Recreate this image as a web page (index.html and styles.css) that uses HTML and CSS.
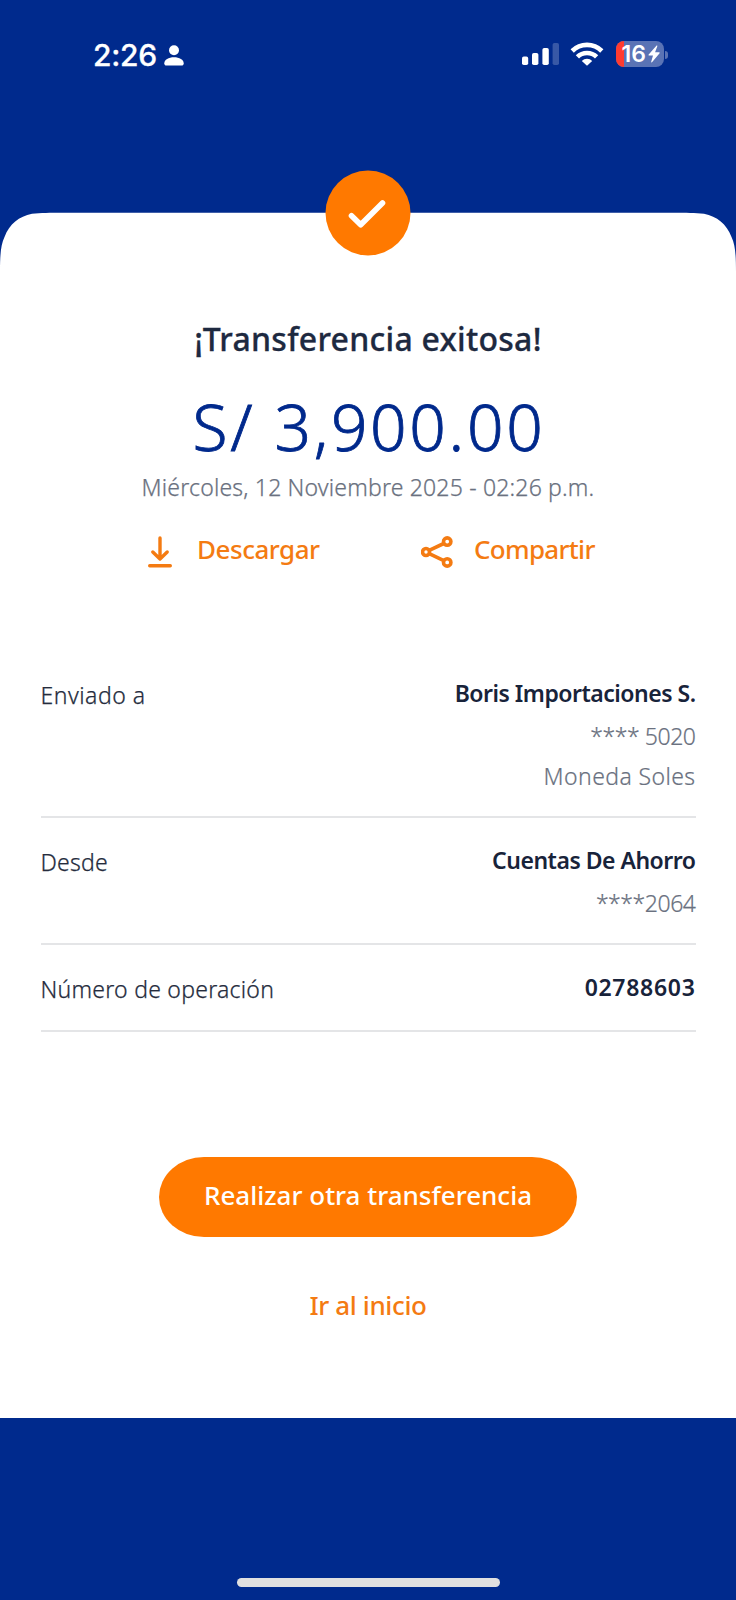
FILE: index.html
```html
<!DOCTYPE html>
<html lang="es">
<head>
<meta charset="utf-8">
<title>Transferencia exitosa</title>
<link rel="stylesheet" href="styles.css">
</head>
<body>
<div class="screen">
  <header class="status">
    <div class="status-left">
      <span class="time">2:26</span>
      <svg class="person" width="20" height="21" viewBox="0 0 20 21" fill="#fff"><circle cx="10" cy="5.3" r="5"/><path d="M0.3 18.3C0.3 14.6 4.6 12.2 10 12.2S19.7 14.6 19.7 18.3C19.7 20 18.9 20.6 17.6 20.6H2.4C1.1 20.6 .3 20 .3 18.3Z"/></svg>
    </div>
    <div class="status-right">
      <svg class="signal" width="38" height="24" viewBox="0 0 38 24" fill="#fff"><rect x="0" y="14.600" width="6.200" height="8.400" rx="1.800"/><rect x="10" y="11" width="6.400" height="12" rx="1.800"/><rect x="20.400" y="6" width="6.400" height="17" rx="1.800"/><rect x="30.600" y="1" width="6.400" height="22" rx="1.800" opacity=".22"/></svg>
      <svg class="wifi" width="34" height="24" viewBox="0 0 34 24" fill="none" stroke="#fff" stroke-width="4.600"><path d="M2.200 9A21 21 0 0 1 31.800 9"/><path d="M7.400 14.900A13.600 13.600 0 0 1 26.600 14.900"/><path d="M17 23.800L11.800 19A7.200 7.200 0 0 1 22.200 19Z" fill="#fff" stroke="none"/></svg>
      <div class="battery"><span class="level"></span><span class="pct">16</span><svg class="bolt" width="12" height="18" viewBox="0 0 12 18" fill="#fff"><path d="M8.600 .6L.5 9.700Q.2 10.500 1 10.500H5L3.200 16.800Q3.200 17.800 4 17.200L11.600 8.200Q12 7.300 11.100 7.300H7.100L9.400 1Q9.400 .1 8.600 .6Z"/></svg></div>
      <span class="nub"></span>
    </div>
  </header>
  <main class="card">
    <svg class="cap" width="736" height="60" viewBox="0 0 736 60" fill="#fff"><path d="M0 60C0 44 .6 33 4.500 25C9.500 12 19 4.500 32 1.800C41 .7 50 .7 62 .7H674C686 .7 695 .7 704 1.800C717 4.500 726.500 12 731.500 25C735.400 33 736 44 736 60Z"/></svg>
    <svg class="badge" width="86" height="86" viewBox="0 0 86 86"><circle cx="43" cy="43" r="42.500" fill="#ff7900"/><path d="M26.500 45.700L35.700 54.800L57.500 33" fill="none" stroke="#fff" stroke-width="5.600" stroke-linecap="round" stroke-linejoin="round"/></svg>
    <h1 class="title">¡Transferencia exitosa!</h1>
    <p class="amount">S/ 3,900.00</p>
    <p class="date">Miércoles, 12 Noviembre 2025 - 02:26 p.m.</p>
    <div class="actions">
      <a class="action download"><svg width="24" height="32" viewBox="0 0 24 32" fill="none" stroke="#f47b12" stroke-width="3.400" stroke-linecap="round" stroke-linejoin="round"><path d="M12 2V22M4.800 16L12 23L19.200 16M1.700 29.800H22.300"/></svg><span>Descargar</span></a>
      <a class="action share"><svg width="32" height="32" viewBox="0 0 32 32" fill="none" stroke="#f47b12" stroke-width="3.600"><circle cx="5" cy="16" r="3.500"/><circle cx="26.200" cy="5.600" r="3.700"/><circle cx="26.200" cy="26.400" r="3.700"/><path d="M8.200 14.400L22.800 7.500M8.200 17.600L22.800 24.600"/></svg><span>Compartir</span></a>
    </div>
    <dl class="rows">
      <div class="row"><dt class="spaced">Enviado a</dt><dd><span class="name">Boris Importaciones S.</span><span class="sub masked">**** 5020</span><span class="sub">Moneda Soles</span></dd></div>
      <div class="row"><dt>Desde</dt><dd><span class="name">Cuentas De Ahorro</span><span class="sub masked">****2064</span></dd></div>
      <div class="row"><dt>Número de operación</dt><dd><span class="name number">02788603</span></dd></div>
    </dl>
    <button class="primary">Realizar otra transferencia</button>
    <a class="home">Ir al inicio</a>
  </main>
  <footer class="bottom"><span class="bar"></span></footer>
</div>
</body>
</html>
```
FILE: styles.css
```css
* { box-sizing: border-box; margin: 0; padding: 0; }
body { width: 736px; height: 1600px; background: #002a8d; font-family: "Noto Sans", "Open Sans", sans-serif; font-weight: 300; }
.screen { height: 1600px; display: flex; flex-direction: column; overflow: hidden; }

.status { height: 212px; padding: 36px 68px 0 93px; display: flex; justify-content: space-between; align-items: flex-start; color: #fff; font-family: Inter, sans-serif; }
.status-left { display: flex; align-items: center; height: 37px; gap: 8px; }
.time { font-size: 30px; font-weight: 500; -webkit-text-stroke: .3px currentColor; line-height: 38px; width: 63px; letter-spacing: -.3px; white-space: nowrap; }
.person { margin-top: 1px; }
.status-right { display: flex; align-items: center; height: 37px; }
.signal { margin-bottom: 1px; }
.wifi { margin: 0 12px 2px 10px; }
.battery { position: relative; overflow: hidden; width: 48px; height: 26px; margin-bottom: 1px; border-radius: 8px; background: #5a73b5; display: flex; align-items: center; padding-left: 6px; }
.level { position: absolute; left: 0; top: 0; width: 8px; height: 26px; background: #ff3b30; }
.pct { position: relative; font-size: 23px; font-weight: 600; line-height: 26px; width: 26px; }
.bolt { position: relative; }
.nub { width: 3px; height: 8px; margin-left: 1.5px; border-radius: 0 3px 3px 0; background: #5a73b5; }

.card { position: relative; height: 1206px; display: flex; flex-direction: column; align-items: center; background: linear-gradient(#002a8d 0 59px, #fff 59px); }
.cap { display: block; flex: none; }
.badge { position: absolute; left: 324.5px; top: -42.5px; }
.title { margin-top: 47px; font-size: 32px; line-height: 40px; font-weight: 500; letter-spacing: .25px; -webkit-text-stroke: .3px currentColor; color: #1d2940; }
.amount { margin-top: 28px; padding-left: 2px; font-size: 64px; line-height: 80px; letter-spacing: 2.7px; -webkit-text-stroke: .8px currentColor; color: #00298c; white-space: nowrap; }
.date { margin-top: 4px; font-size: 23px; line-height: 32px; letter-spacing: .18px; -webkit-text-stroke: .25px currentColor; color: #6a7180; white-space: nowrap; }

.actions { margin-top: 26px; width: 440px; display: flex; justify-content: space-between; font-size: 26px; font-weight: 500; line-height: 40px; color: #f47b12; }
.action { display: flex; align-items: center; }
.action svg { flex: none; margin-top: 5px; }
.download { gap: 25px; letter-spacing: -.48px; }
.share { gap: 21px; width: 167px; letter-spacing: -.7px; }

.rows { margin-top: 104px; width: 655px; }
.row { display: flex; justify-content: space-between; padding-bottom: 20px; margin-bottom: 22px; border-bottom: 2px solid #e4e5e7; font-size: 23px; line-height: 40px; }
dt { padding-top: 2px; letter-spacing: .25px; -webkit-text-stroke: .25px currentColor; color: #252c3d; }
.spaced { letter-spacing: .5px; }
dd { display: flex; flex-direction: column; align-items: flex-end; }
.name { margin-bottom: 3px; font-weight: 600; letter-spacing: -.5px; color: #18233a; }
.number { letter-spacing: .7px; }
.sub { letter-spacing: .4px; -webkit-text-stroke: .2px currentColor; color: #6a7180; }
.masked { letter-spacing: -.45px; }

.primary { margin-top: 103px; padding-bottom: 3px; width: 418px; height: 80px; border: 0; border-radius: 45px / 40px; background: #ff7900; color: #fff; font: 500 26px/37px "Noto Sans", "Open Sans", sans-serif; }
.home { margin-top: 48px; font-size: 26px; font-weight: 500; line-height: 40px; letter-spacing: -.38px; color: #f47b12; }

.bottom { flex: 1; display: flex; align-items: flex-end; justify-content: center; padding: 0 0 13px 1px; }
.bar { width: 263px; height: 9px; border-radius: 5px; background: #e0e0e0; }
```
